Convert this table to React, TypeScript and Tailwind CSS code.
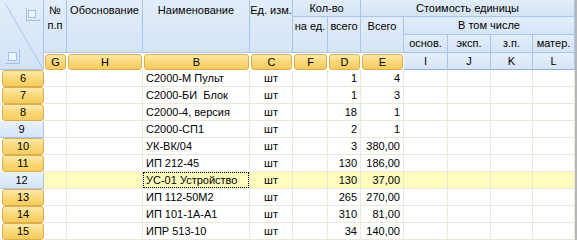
import React from 'react';

type Row = { n: number; name: string; unit: string; qty: string; total: string; blue?: boolean; selected?: boolean };

const rows: Row[] = [
  { n: 6, name: 'С2000-М Пульт', unit: 'шт', qty: '1', total: '4' },
  { n: 7, name: 'С2000-БИ  Блок', unit: 'шт', qty: '1', total: '3' },
  { n: 8, name: 'С2000-4, версия', unit: 'шт', qty: '18', total: '1' },
  { n: 9, name: 'С2000-СП1', unit: 'шт', qty: '2', total: '1', blue: true },
  { n: 10, name: 'УК-ВК/04', unit: 'шт', qty: '3', total: '380,00' },
  { n: 11, name: 'ИП 212-45', unit: 'шт', qty: '130', total: '186,00' },
  { n: 12, name: 'УС-01 Устройство', unit: 'шт', qty: '130', total: '37,00', blue: true, selected: true },
  { n: 13, name: 'ИП 112-50М2', unit: 'шт', qty: '265', total: '270,00' },
  { n: 14, name: 'ИП 101-1А-А1', unit: 'шт', qty: '310', total: '81,00' },
  { n: 15, name: 'ИПР 513-10', unit: 'шт', qty: '34', total: '140,00' },
];

const hdr = 'border-r border-b border-[#a9c5ea] bg-gradient-to-b from-[#e3edfa] to-[#d5e4f7] text-center';
const orange =
  'm-px mb-0 rounded-[3px] border border-[#dcae4e] bg-gradient-to-b from-[#fde9ab] via-[#f9d878] to-[#f6cc5e] text-center leading-[14px]';
const blueLetter = 'border-r border-b border-[#a9c5ea] border-b-[#8eb0e2] bg-gradient-to-b from-[#e6effb] to-[#d6e5f8] text-center leading-[16px]';

function Corner() {
  return (
    <div className="col-start-1 row-start-1 row-span-4 border-r border-b border-[#a9c5ea] bg-gradient-to-b from-[#e3edfa] to-[#d3e3f7]">
      <svg width="43" height="69" viewBox="0 0 43 69">
        <line x1="5" y1="3" x2="43" y2="69" stroke="#a9c5ea" strokeWidth="1" />
        <rect x="28.5" y="10.5" width="7" height="7" fill="#eef4fc" stroke="#a3bfe6" />
        <path d="M26.5 8 V20.5 H40" fill="none" stroke="#a3bfe6" />
        <rect x="8.5" y="52.5" width="8" height="8" fill="#eef4fc" stroke="#a3bfe6" />
        <path d="M19.5 49 V63.5 H5" fill="none" stroke="#a3bfe6" />
      </svg>
    </div>
  );
}

export default function App() {
  return (
    <div className="h-[240px] w-[577px] overflow-hidden border-r-2 border-[#b8b8b8] bg-white text-[11px] text-black [font-family:'Liberation_Sans',Arial,sans-serif]">
      <div className="grid grid-cols-[44px_23px_76px_107px_43px_35px_33px_43px_44px_43px_42px_42px] grid-rows-[17px_18px_18px_17px]">
        <Corner />
        <div className={`${hdr} col-start-2 row-start-1 row-span-3 pt-[3px] leading-[15px]`}>
          №<br />п.п
        </div>
        <div className={`${hdr} col-start-3 row-start-1 row-span-3 pt-[3px] leading-[15px]`}>Обоснование</div>
        <div className={`${hdr} col-start-4 row-start-1 row-span-3 pt-[3px] leading-[15px]`}>Наименование</div>
        <div className={`${hdr} col-start-5 row-start-1 row-span-3 whitespace-nowrap pt-[3px] leading-[15px]`}>Ед. изм.</div>
        <div className={`${hdr} col-start-6 col-span-2 row-start-1 leading-[17px]`}>Кол-во</div>
        <div className={`${hdr} col-start-6 row-start-2 row-span-2 whitespace-nowrap pt-[2px] leading-[15px]`}>на ед.</div>
        <div className={`${hdr} col-start-7 row-start-2 row-span-2 pt-[2px] leading-[15px]`}>всего</div>
        <div className={`${hdr} col-start-8 col-span-5 row-start-1 leading-[17px]`}>Стоимость единицы</div>
        <div className={`${hdr} col-start-8 row-start-2 row-span-2 pt-[2px] leading-[15px]`}>Всего</div>
        <div className={`${hdr} col-start-9 col-span-4 row-start-2 leading-[17px]`}>В том числе</div>
        <div className={`${hdr} col-start-9 row-start-3 leading-[17px]`}>основ.</div>
        <div className={`${hdr} col-start-10 row-start-3 leading-[17px]`}>эксп.</div>
        <div className={`${hdr} col-start-11 row-start-3 leading-[17px]`}>з.п.</div>
        <div className={`${hdr} col-start-12 row-start-3 leading-[17px]`}>матер.</div>

        <div className={`${orange} col-start-2 row-start-4`}>G</div>
        <div className={`${orange} col-start-3 row-start-4`}>H</div>
        <div className={`${orange} col-start-4 row-start-4`}>B</div>
        <div className={`${orange} col-start-5 row-start-4`}>C</div>
        <div className={`${orange} col-start-6 row-start-4`}>F</div>
        <div className={`${orange} col-start-7 row-start-4`}>D</div>
        <div className={`${orange} col-start-8 row-start-4 border-[#c99a3a]`}>E</div>
        <div className={`${blueLetter} col-start-9 row-start-4`}>I</div>
        <div className={`${blueLetter} col-start-10 row-start-4`}>J</div>
        <div className={`${blueLetter} col-start-11 row-start-4`}>K</div>
        <div className={`${blueLetter} col-start-12 row-start-4`}>L</div>
      </div>

      {rows.map((r) => {
        const cell = `border-r border-b border-[#ebe8d9] ${r.selected ? 'bg-[#fffdbd]' : ''}`;
        return (
          <div
            key={r.n}
            className="grid h-[17px] grid-cols-[44px_23px_76px_107px_43px_35px_33px_43px_44px_43px_42px_42px] leading-[16px]"
          >
            {r.blue ? (
              <div className="border-r border-b border-[#a9c5ea] bg-gradient-to-b from-[#eaf1fc] to-[#d4e4f7] text-center">
                {r.n}
              </div>
            ) : (
              <div className="ml-[2px] rounded-[3px] border border-[#dcae4e] bg-gradient-to-b from-[#fde9ab] via-[#f9d878] to-[#f6cc5e] text-center leading-[15px]">
                {r.n}
              </div>
            )}
            <div className={cell} />
            <div className={cell} />
            <div className={`${cell} ${r.selected ? 'p-0' : 'px-[3px]'}`}>
              {r.selected ? (
                <div className="h-full whitespace-pre border border-dotted border-black px-[2px] leading-[14px]">{r.name}</div>
              ) : (
                <span className="whitespace-pre">{r.name}</span>
              )}
            </div>
            <div className={`${cell} text-center`}>{r.unit}</div>
            <div className={cell} />
            <div className={`${cell} pr-[3px] text-right`}>{r.qty}</div>
            <div className={`${cell} pr-[3px] text-right`}>{r.total}</div>
            <div className={cell} />
            <div className={cell} />
            <div className={cell} />
            <div className={cell} />
          </div>
        );
      })}
    </div>
  );
}
